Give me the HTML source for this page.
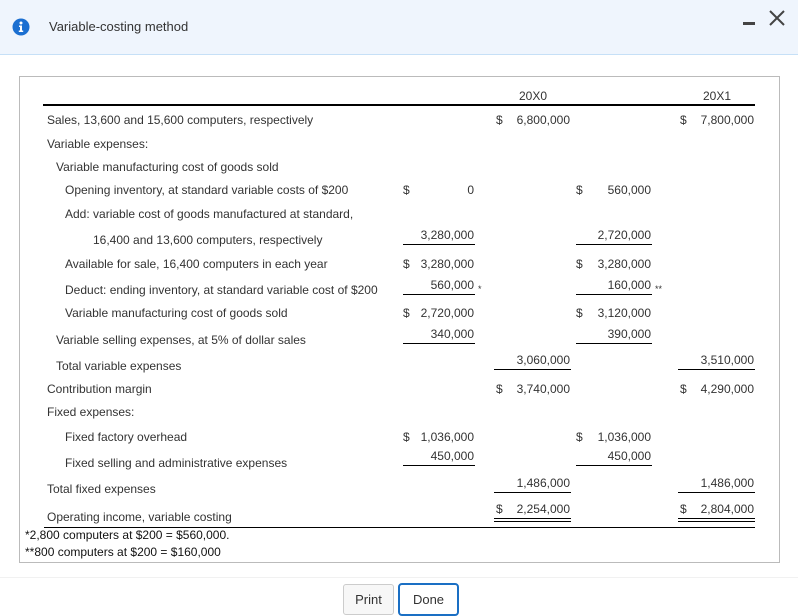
<!DOCTYPE html>
<html><head><meta charset="utf-8"><style>
body{margin:0;width:798px;height:616px;background:#fff;position:relative;overflow:hidden;font-family:"Liberation Sans",Arial,sans-serif;font-size:12px;color:#333}
.a{position:absolute;white-space:nowrap;line-height:14px}
.r{position:absolute;white-space:nowrap;line-height:14px;text-align:right}
.l{position:absolute;height:1px;background:#000}
</style></head><body>
<div style="position:absolute;left:0;top:0;width:798px;height:54px;background:#eff5fd;border-bottom:1px solid #c6e0f7"></div>
<svg style="position:absolute;left:12px;top:18px" width="18" height="18" viewBox="0 0 18 18"><circle cx="9" cy="9" r="8.5" fill="#1b6fd1"/><circle cx="9" cy="5" r="1.5" fill="#fff"/><path d="M7 7.5h3v5h1.2v1.5H6.8v-1.5H8v-3.5H7z" fill="#fff"/></svg>
<div class="a" style="left:49px;top:20px;font-size:13px;color:#333">Variable-costing method</div>
<div style="position:absolute;left:743px;top:22px;width:12px;height:3px;background:#444"></div>
<svg style="position:absolute;left:768px;top:9px" width="18" height="18" viewBox="0 0 18 18"><path d="M2 2L16 16M16 2L2 16" stroke="#444" stroke-width="2"/></svg>

<div style="position:absolute;left:19px;top:76px;width:759px;height:485px;border:1px solid #bbb"></div>

<div class="a" style="left:519px;top:89px">20X0</div>
<div class="a" style="left:703px;top:89px">20X1</div>
<div class="l" style="left:43px;top:104px;width:712px;height:2px"></div>

<div class="a" style="left:47px;top:113px">Sales, 13,600 and 15,600 computers, respectively</div>
<div class="a" style="left:496px;top:113px">$</div><div class="r" style="right:228px;top:113px">6,800,000</div>
<div class="a" style="left:680px;top:113px">$</div><div class="r" style="right:44px;top:113px">7,800,000</div>

<div class="a" style="left:47px;top:137px">Variable expenses:</div>
<div class="a" style="left:56px;top:160px">Variable manufacturing cost of goods sold</div>

<div class="a" style="left:65px;top:183px">Opening inventory, at standard variable costs of $200</div>
<div class="a" style="left:403px;top:183px">$</div><div class="r" style="right:324px;top:183px">0</div>
<div class="a" style="left:576px;top:183px">$</div><div class="r" style="right:147px;top:183px">560,000</div>

<div class="a" style="left:65px;top:207px">Add: variable cost of goods manufactured at standard,</div>
<div class="a" style="left:93px;top:233px">16,400 and 13,600 computers, respectively</div>
<div class="r" style="right:324px;top:228px">3,280,000</div>
<div class="r" style="right:147px;top:228px">2,720,000</div>
<div class="l" style="left:403px;top:244px;width:72px"></div>
<div class="l" style="left:576px;top:244px;width:76px"></div>

<div class="a" style="left:65px;top:257px">Available for sale, 16,400 computers in each year</div>
<div class="a" style="left:403px;top:257px">$</div><div class="r" style="right:324px;top:257px">3,280,000</div>
<div class="a" style="left:576px;top:257px">$</div><div class="r" style="right:147px;top:257px">3,280,000</div>

<div class="a" style="left:65px;top:283px">Deduct: ending inventory, at standard variable cost of $200</div>
<div class="r" style="right:324px;top:278px">560,000</div><div class="a" style="left:478px;top:282px;font-size:9px">*</div>
<div class="r" style="right:147px;top:278px">160,000</div><div class="a" style="left:655px;top:282px;font-size:9px">**</div>
<div class="l" style="left:403px;top:294px;width:72px"></div>
<div class="l" style="left:576px;top:294px;width:76px"></div>

<div class="a" style="left:65px;top:306px">Variable manufacturing cost of goods sold</div>
<div class="a" style="left:403px;top:306px">$</div><div class="r" style="right:324px;top:306px">2,720,000</div>
<div class="a" style="left:576px;top:306px">$</div><div class="r" style="right:147px;top:306px">3,120,000</div>

<div class="a" style="left:56px;top:333px">Variable selling expenses, at 5% of dollar sales</div>
<div class="r" style="right:324px;top:327px">340,000</div>
<div class="r" style="right:147px;top:327px">390,000</div>
<div class="l" style="left:403px;top:343px;width:72px"></div>
<div class="l" style="left:576px;top:343px;width:76px"></div>

<div class="a" style="left:56px;top:359px">Total variable expenses</div>
<div class="r" style="right:228px;top:353px">3,060,000</div>
<div class="r" style="right:44px;top:353px">3,510,000</div>
<div class="l" style="left:494px;top:369px;width:77px"></div>
<div class="l" style="left:678px;top:369px;width:77px"></div>

<div class="a" style="left:47px;top:382px">Contribution margin</div>
<div class="a" style="left:496px;top:382px">$</div><div class="r" style="right:228px;top:382px">3,740,000</div>
<div class="a" style="left:680px;top:382px">$</div><div class="r" style="right:44px;top:382px">4,290,000</div>

<div class="a" style="left:47px;top:405px">Fixed expenses:</div>
<div class="a" style="left:65px;top:430px">Fixed factory overhead</div>
<div class="a" style="left:403px;top:430px">$</div><div class="r" style="right:324px;top:430px">1,036,000</div>
<div class="a" style="left:576px;top:430px">$</div><div class="r" style="right:147px;top:430px">1,036,000</div>

<div class="a" style="left:65px;top:456px">Fixed selling and administrative expenses</div>
<div class="r" style="right:324px;top:449px">450,000</div>
<div class="r" style="right:147px;top:449px">450,000</div>
<div class="l" style="left:403px;top:465px;width:72px"></div>
<div class="l" style="left:576px;top:465px;width:76px"></div>

<div class="a" style="left:47px;top:482px">Total fixed expenses</div>
<div class="r" style="right:228px;top:476px">1,486,000</div>
<div class="r" style="right:44px;top:476px">1,486,000</div>
<div class="l" style="left:494px;top:492px;width:77px"></div>
<div class="l" style="left:678px;top:492px;width:77px"></div>

<div class="a" style="left:47px;top:510px">Operating income, variable costing</div>
<div class="a" style="left:496px;top:502px">$</div><div class="r" style="right:228px;top:502px">2,254,000</div>
<div class="a" style="left:680px;top:502px">$</div><div class="r" style="right:44px;top:502px">2,804,000</div>
<div class="l" style="left:494px;top:518px;width:77px"></div>
<div class="l" style="left:494px;top:521px;width:77px"></div>
<div class="l" style="left:678px;top:518px;width:77px"></div>
<div class="l" style="left:678px;top:521px;width:77px"></div>
<div class="l" style="left:44px;top:527px;width:711px"></div>

<div class="a" style="left:25px;top:528px;color:#111">*2,800 computers at $200 = $560,000.</div>
<div class="a" style="left:25px;top:545px;color:#111">**800 computers at $200 = $160,000</div>

<div style="position:absolute;left:0;top:577px;width:798px;height:1px;background:#f1f1f1"></div>
<div style="position:absolute;left:343px;top:584px;width:49px;height:29px;border:1px solid #ccc;border-radius:3px;background:#f7f7f7;text-align:center;line-height:29px;font-size:13px;color:#333">Print</div>
<div style="position:absolute;left:398px;top:583px;width:57px;height:29px;border:2px solid #1a6fc4;border-radius:4px;background:#fff;text-align:center;line-height:29px;font-size:13px;color:#333">Done</div>
</body></html>
